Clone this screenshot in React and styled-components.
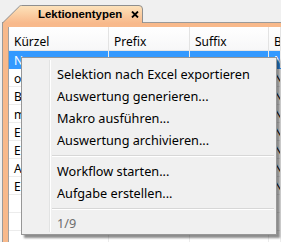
import React from 'react'
import styled, { createGlobalStyle } from 'styled-components'

const GlobalStyle = createGlobalStyle`
  html, body {
    margin: 0;
    padding: 0;
    background: #f0f0f0;
  }
  body {
    font-family: "Noto Sans", "Liberation Sans", Arial, sans-serif;
    font-size: 12px;
    color: #000;
    overflow: hidden;
  }
`

const columns = ['Kürzel', 'Prefix', 'Suffix', 'B']
const rows = ['N', 'o', 'B', 'm', 'E', 'E', 'A', 'E', '', '', '', '']

const menuItems = [
    { label: 'Selektion nach Excel exportieren' },
    { label: 'Auswertung generieren...' },
    { label: 'Makro ausführen...' },
    { label: 'Auswertung archivieren...' },
    { separator: true },
    { label: 'Workflow starten...' },
    { label: 'Aufgabe erstellen...' },
    { separator: true },
    { label: '1/9', disabled: true },
]

const App = () => {
    return (
        <>
            <GlobalStyle />
            <Window>
                <TabStrip>
                    <Tab>
                        <TabShape viewBox="0 0 141 18" preserveAspectRatio="none">
                            <defs>
                                <linearGradient id="tabFill" x1="0" y1="0" x2="0" y2="1">
                                    <stop offset="0" stopColor="#fde3bb" />
                                    <stop offset="1" stopColor="#f8b98b" />
                                </linearGradient>
                            </defs>
                            <path d="M0.5,18 L17.5,1.2 Q18.3,0.5 19.5,0.5 L137,0.5 Q140.5,0.5 140.5,4 L140.5,18"
                                fill="url(#tabFill)" stroke="#8f8f8f" strokeWidth="1" />
                        </TabShape>
                        <TabLabel>Lektionentypen</TabLabel>
                        <CloseIcon viewBox="0 0 8 7">
                            <path d="M1,0.5 L7,6.5 M7,0.5 L1,6.5" stroke="#000" strokeWidth="1.8" />
                        </CloseIcon>
                    </Tab>
                </TabStrip>
                <Frame>
                    <Table>
                        <HeaderRow>
                            {columns.map((c) => (
                                <HeaderCell key={c}>{c}</HeaderCell>
                            ))}
                        </HeaderRow>
                        {rows.map((r, i) => (
                            <Row key={i} selected={i === 0}>
                                <Cell>{r}</Cell>
                                <Cell />
                                <Cell />
                                <Cell>{r ? 'N' : ''}</Cell>
                            </Row>
                        ))}
                    </Table>
                </Frame>

                <Menu>
                    {menuItems.map((m, i) =>
                        m.separator ? (
                            <Separator key={i} />
                        ) : (
                            <MenuItem key={i} disabled={m.disabled}>{m.label}</MenuItem>
                        )
                    )}
                </Menu>
            </Window>
        </>
    )
}

const Window = styled.div`
    position: relative;
    width: 281px;
    height: 242px;
    overflow: hidden;
    background: #f0f0f0;
    display: flex;
    flex-direction: column;
`

const TabStrip = styled.div`
    height: 22px;
    padding-left: 2px;
    display: flex;
    align-items: flex-end;
    flex-shrink: 0;
`

const Tab = styled.div`
    position: relative;
    z-index: 1;
    width: 141px;
    height: 18px;
    margin-bottom: -1px;
    display: flex;
    align-items: center;
`

const TabShape = styled.svg`
    position: absolute;
    inset: 0;
    width: 100%;
    height: 100%;
`

const TabLabel = styled.span`
    position: relative;
    padding-left: 36px;
    font-family: "Liberation Sans", Arial, sans-serif;
    font-weight: bold;
    font-size: 11.4px;
    line-height: 18px;
    white-space: nowrap;
`

const CloseIcon = styled.svg`
    position: relative;
    flex-shrink: 0;
    width: 8px;
    height: 7px;
    margin-left: auto;
    margin-right: 4px;
    margin-top: 1px;
`

const Frame = styled.div`
    flex: 1;
    margin-left: 2px;
    border-top: 1px solid #9a9a9a;
    border-left: 1px solid #9a9a9a;
    background: #f8b98b;
    padding: 4px 0 0 5px;
    display: flex;
    min-height: 0;
`

const Table = styled.div`
    flex: 1;
    background: #fff;
    border-left: 1px solid #a0a0a0;
    display: flex;
    flex-direction: column;
    overflow: hidden;
`

const HeaderRow = styled.div`
    display: grid;
    grid-template-columns: 100px 81px 79px 1fr;
    height: 23px;
    flex-shrink: 0;
    background: linear-gradient(#ffffff, #f7f7f8);
    border-bottom: 1px solid #e5e5e5;
`

const HeaderCell = styled.div`
    padding: 7px 0 0 5px;
    line-height: 15px;
    border-right: 1px solid #e3e3e3;
    white-space: nowrap;
    overflow: hidden;
    color: #000;
`

const Row = styled.div`
    display: grid;
    grid-template-columns: 100px 81px 79px 1fr;
    height: 17px;
    flex-shrink: 0;
    background: ${(p) => (p.selected ? '#3399ff' : '#fff')};
    color: ${(p) => (p.selected ? '#fff' : '#000')};
    border-bottom: 1px solid ${(p) => (p.selected ? '#3399ff' : '#ececec')};
`

const Cell = styled.div`
    padding: 3px 0 0 5px;
    border-right: 1px solid #ececec;
    white-space: nowrap;
    overflow: hidden;
    line-height: 14px;
`

const Menu = styled.div`
    position: absolute;
    left: 21px;
    top: 57px;
    width: 256px;
    box-sizing: border-box;
    padding: 5px 2px 1px 2px;
    background: #f0f0f0;
    border: 1px solid #979797;
    box-shadow: 3px 3px 2px rgba(0, 0, 0, 0.45);
    z-index: 5;

    &::before {
        content: '';
        position: absolute;
        top: 2px;
        bottom: 2px;
        left: 27px;
        width: 1px;
        background: #e2e3e3;
        border-right: 1px solid #ffffff;
    }
`

const MenuItem = styled.div`
    position: relative;
    height: 22px;
    line-height: 22px;
    padding-left: 33px;
    font-size: 12.7px;
    white-space: nowrap;
    color: ${(p) => (p.disabled ? '#6d6d6d' : '#000')};
    ${(p) => p.disabled && 'height: 20px; line-height: 20px;'}
`

const Separator = styled.div`
    position: relative;
    height: 1px;
    margin: 4px 0 3px 28px;
    background: #d7d7d7;
    border-bottom: 1px solid #ffffff;
`

export default App
